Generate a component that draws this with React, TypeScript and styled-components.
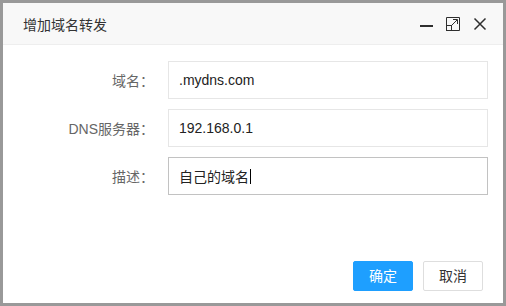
import { Fragment } from 'react';
import styled, { createGlobalStyle } from 'styled-components';

const GlobalStyle = createGlobalStyle`
  html, body {
    margin: 0;
    padding: 0;
    background: #fff;
  }
  * {
    box-sizing: border-box;
  }
`;

const FONT = `"Liberation Sans", "Noto Sans CJK SC", sans-serif`;

const Layer = styled.div`
  width: 506px;
  height: 306px;
  border: 3px solid #999;
  background: #fff;
  display: flex;
  flex-direction: column;
  font-family: ${FONT};
  font-size: 14px;
`;

const TitleBar = styled.div`
  height: 42px;
  flex: none;
  display: flex;
  align-items: center;
  justify-content: space-between;
  padding: 0 16px 0 20px;
  background: #f8f8f8;
  border-bottom: 1px solid #eee;
  color: #333;
`;

const Title = styled.span`
  font-size: 14px;
`;

const Tools = styled.div`
  display: flex;
  align-items: center;
  gap: 13px;
`;

const ToolButton = styled.span`
  display: flex;
  align-items: center;
  justify-content: center;
  width: 14px;
  height: 14px;
  color: #2e2e2e;
`;

const Form = styled.div`
  flex: 1;
  display: grid;
  grid-template-columns: 151px 1fr;
  grid-auto-rows: 38px;
  align-content: start;
  column-gap: 14px;
  row-gap: 10px;
  padding: 16px 15px 0 0;
`;

const Label = styled.label`
  display: flex;
  align-items: center;
  justify-content: flex-end;
  color: #666;
`;

const Field = styled.div<{ $focused?: boolean }>`
  display: flex;
  align-items: center;
  height: 38px;
  padding-left: 10px;
  border: 1px solid ${(p) => (p.$focused ? '#c2c2c2' : '#e6e6e6')};
  background: #fff;
  color: #222;
`;

const Caret = styled.span`
  display: inline-block;
  width: 1px;
  height: 15px;
  background: #000;
  margin-left: 1px;
`;

const Footer = styled.div`
  flex: none;
  display: flex;
  justify-content: flex-end;
  gap: 10px;
  padding: 0 20px 12px 0;
`;

const Button = styled.button<{ $primary?: boolean }>`
  height: 30px;
  padding: 0 15px;
  border-radius: 2px;
  border: 1px solid ${(p) => (p.$primary ? '#1e9fff' : '#dedede')};
  background: ${(p) => (p.$primary ? '#1e9fff' : '#fff')};
  color: ${(p) => (p.$primary ? '#fff' : '#333')};
  font-family: ${FONT};
  font-size: 14px;
  line-height: 28px;
  cursor: pointer;
`;

const rows = [
  { id: 'domain', text: '域名：', value: '.mydns.com' },
  { id: 'dns', text: 'DNS服务器：', value: '192.168.0.1' },
  { id: 'desc', text: '描述：', value: '自己的域名', focused: true },
];

export default function App() {
  return (
    <>
      <GlobalStyle />
      <Layer>
        <TitleBar>
          <Title>增加域名转发</Title>
          <Tools>
            <ToolButton title="最小化">
              <svg width="14" height="14" viewBox="0 0 14 14">
                <rect x="1" y="8" width="13" height="2" fill="currentColor" />
              </svg>
            </ToolButton>
            <ToolButton title="最大化">
              <svg width="14" height="14" viewBox="0 0 14 14" fill="none" stroke="currentColor" strokeWidth="1">
                <path d="M0.5 8 V0.5 H13.5 V13.5 H6" />
                <rect x="0.5" y="8.5" width="5" height="5" />
                <path d="M5.5 8.5 L11 3" />
                <path d="M7 2.5 H11.5 V7" />
              </svg>
            </ToolButton>
            <ToolButton title="关闭">
              <svg width="14" height="14" viewBox="0 0 14 14" fill="none" stroke="currentColor" strokeWidth="1.5">
                <path d="M1.5 1.5 L12.5 12.5 M12.5 1.5 L1.5 12.5" />
              </svg>
            </ToolButton>
          </Tools>
        </TitleBar>

        <Form>
          {rows.map((r) => (
            <Fragment key={r.id}>
              <Label>{r.text}</Label>
              <Field $focused={r.focused}>
                {r.value}
                {r.focused && <Caret />}
              </Field>
            </Fragment>
          ))}
        </Form>

        <Footer>
          <Button $primary>确定</Button>
          <Button>取消</Button>
        </Footer>
      </Layer>
    </>
  );
}
